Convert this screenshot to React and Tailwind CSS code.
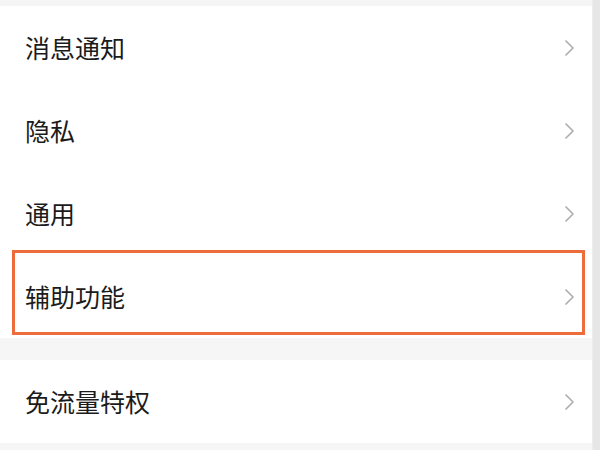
import React from "react";

const Chevron = () => (
  <svg width="11" height="18" viewBox="0 0 11 18" fill="none" className="shrink-0">
    <path d="M2 2l7 7-7 7" stroke="#aeaeae" strokeWidth="1.7" strokeLinecap="round" strokeLinejoin="round" />
  </svg>
);

function Row({ label, highlight }) {
  return (
    <div className="relative h-[83px] flex items-center justify-between pl-[25px] pr-[17px] bg-white">
      <span className="text-[25px] text-[#1b1b1b] leading-none">{label}</span>
      <Chevron />
      {highlight && (
        <div className="absolute left-[12px] right-[7px] top-[-5px] bottom-[3px] border-[3.5px] border-[#ee6c3c] pointer-events-none" />
      )}
    </div>
  );
}

export default function App() {
  return (
    <div
      className="w-[600px] h-[450px] overflow-hidden flex bg-[#f6f6f6]"
      style={{ fontFamily: '"Noto Sans CJK SC", "Noto Sans", sans-serif' }}
    >
      <div className="flex-1 flex flex-col">
        <div className="h-[6px] bg-[#f5f5f5]" />
        <Row label="消息通知" />
        <Row label="隐私" />
        <Row label="通用" />
        <Row label="辅助功能" highlight />
        <div className="h-[22px] bg-[#f6f6f6]" />
        <Row label="免流量特权" />
      </div>
      <div className="w-[8px] bg-[#e6e6e6] border-l border-[#ededed]" />
    </div>
  );
}
